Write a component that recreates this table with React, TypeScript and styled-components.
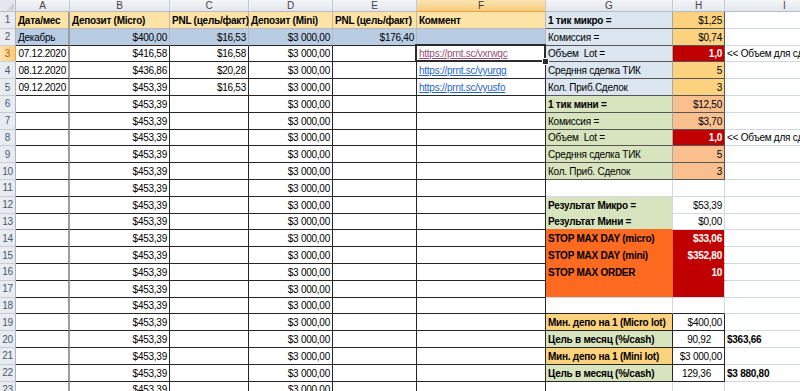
import React from "react";
import styled, { createGlobalStyle, css } from "styled-components";

const GlobalStyle = createGlobalStyle`
  html, body {
    margin: 0;
    padding: 0;
    background: #fff;
    overflow: hidden;
  }
  body {
    font-family: "Liberation Sans", Arial, sans-serif;
  }
`;

type Align = "left" | "right" | "center";

type Spec = {
  text?: string;
  bg?: string;
  align?: Align;
  bold?: boolean;
  color?: string;
  bottom: string;
  right: string;
  rightW?: number;
  pr?: number;
  link?: "visited" | "fresh";
  selected?: boolean;
};

const COLS = ["A", "B", "C", "D", "E", "F", "G", "H", "I"];
const WIDTHS = [54, 100, 79, 84, 84, 129, 127, 52, 120];
const ROWS = Array.from({ length: 23 }, (_, i) => i + 1);

const GRID = "#d0d7e5";
const DARK = "#262626";
const SOFT = "#b8b8b8";
const FROZEN = "#9d9d9d";
const MID = "#555555";

const C = {
  sand: "#fde4a6",
  blue: "#b8cce4",
  ice: "#dce6f1",
  gold: "#fcd27f",
  sage: "#d7e4bd",
  salmon: "#fabf8f",
  red: "#c00000",
  orange: "#ff6a21",
};

const Sheet = styled.div`
  display: grid;
  grid-template-columns: 16px ${WIDTHS.map((w) => `${w}px`).join(" ")};
  grid-template-rows: 12px repeat(23, 16.8px);
  width: max-content;
  font-size: 10px;
  color: #000;
`;

const Corner = styled.div`
  position: relative;
  box-sizing: border-box;
  background: #e4e8ee;
  border-right: 1px solid #b5bcc6;
  border-bottom: 1px solid #b5bcc6;

  &::after {
    content: "";
    position: absolute;
    right: 1px;
    bottom: 1px;
    border-left: 7px solid transparent;
    border-bottom: 7px solid #c9d0da;
  }
`;

const ColHead = styled.div<{ $active?: boolean }>`
  box-sizing: border-box;
  display: flex;
  align-items: center;
  justify-content: center;
  font-size: 10px;
  line-height: 11px;
  color: #444;
  background: linear-gradient(#f3f5f8, #e3e7ed);
  border-right: 1px solid #c3c9d1;
  border-bottom: 1px solid #b5bcc6;

  ${(p) =>
    p.$active &&
    css`
      color: #3a3a3a;
      background: linear-gradient(#fbe4b3, #f7cd7f);
      border-bottom-color: #f0a040;
    `}
`;

const RowHead = styled.div<{ $active?: boolean }>`
  box-sizing: border-box;
  display: flex;
  align-items: center;
  justify-content: center;
  font-size: 10px;
  letter-spacing: -0.3px;
  color: #4a5870;
  background: #e8ecf1;
  border-right: 1px solid #a8b6c8;
  border-bottom: 1px solid #c8cdd4;

  ${(p) =>
    p.$active &&
    css`
      color: #b85d10;
      background: linear-gradient(90deg, #fbe1aa, #f7cd80);
      border-right-color: #f0a040;
    `}
`;

const Cell = styled.div<{
  $bg?: string;
  $align?: Align;
  $bold?: boolean;
  $color?: string;
  $bottom: string;
  $right: string;
  $rightW?: number;
  $pr?: number;
  $selected?: boolean;
}>`
  box-sizing: border-box;
  position: relative;
  display: flex;
  align-items: flex-end;
  justify-content: ${(p) =>
    p.$align === "right" ? "flex-end" : p.$align === "center" ? "center" : "flex-start"};
  min-width: 0;
  padding: 0 ${(p) => p.$pr ?? 2}px 1px 2px;
  background: ${(p) => p.$bg ?? "#fff"};
  color: ${(p) => p.$color ?? "#000"};
  font-weight: ${(p) => (p.$bold ? 700 : 400)};
  letter-spacing: -0.25px;
  line-height: 12px;
  white-space: pre;
  border-right: ${(p) => p.$rightW ?? 1}px solid ${(p) => p.$right};
  border-bottom: 1px solid ${(p) => p.$bottom};

  ${(p) =>
    p.$selected &&
    css`
      z-index: 2;

      &::after {
        content: "";
        position: absolute;
        left: -2px;
        top: -2px;
        right: -1px;
        bottom: -1px;
        border: 2px solid #2b2b2b;
        pointer-events: none;
      }

      &::before {
        content: "";
        position: absolute;
        right: -4px;
        bottom: -4px;
        width: 5px;
        height: 5px;
        background: #2b2b2b;
        border: 1px solid #fff;
        z-index: 3;
      }
    `}
`;

const Link = styled.a<{ $visited?: boolean }>`
  color: ${(p) => (p.$visited ? "#954f72" : "#1f66c9")};
  text-decoration: underline;
`;

const dates = ["07.12.2020", "08.12.2020", "09.12.2020"];
const microDeposit = ["$416,58", "$436,86", "$453,39"];
const microPnl = ["$16,58", "$20,28", "$16,53"];
const links = ["https://prnt.sc/vxrwqc", "https://prnt.sc/vyurqg", "https://prnt.sc/vyusfo"];

function mainCell(row: number, col: number): Spec {
  const right = col === 0 ? FROZEN : row <= 2 ? SOFT : DARK;
  const rightW = col === 0 ? 2 : 1;

  if (row === 1) {
    const heads = ["Дата/мес", "Депозит (Micro)", "PNL (цель/факт)", "Депозит (Mini)", "PNL (цель/факт)", "Коммент"];
    return { text: heads[col], bg: C.sand, bold: true, bottom: SOFT, right, rightW };
  }
  if (row === 2) {
    const vals = ["Декабрь", "$400,00", "$16,53", "$3 000,00", "$176,40", ""];
    return { text: vals[col], bg: C.blue, align: col === 0 ? "left" : "right", bottom: DARK, right, rightW };
  }

  const base: Spec = { bottom: DARK, right, rightW, align: "right" };
  const k = row - 3;
  switch (col) {
    case 0:
      return { ...base, text: dates[k] };
    case 1:
      return { ...base, text: microDeposit[k] ?? "$453,39" };
    case 2:
      return { ...base, text: microPnl[k] };
    case 3:
      return { ...base, text: "$3 000,00" };
    case 5:
      return links[k]
        ? { ...base, align: "left", text: links[k], link: k === 0 ? "visited" : "fresh", selected: k === 0 }
        : base;
    default:
      return base;
  }
}

const microBlock = [
  ["1 тик микро =", "$1,25"],
  ["Комиссия =", "$0,74"],
  ["Объем  Lot =", "1,0"],
  ["Средння сделка ТИК", "5"],
  ["Кол. Приб.Сделок", "3"],
];

const miniBlock = [
  ["1 тик мини =", "$12,50"],
  ["Комиссия =", "$3,70"],
  ["Объем  Lot =", "1,0"],
  ["Средння сделка ТИК", "5"],
  ["Кол. Приб. Сделок", "3"],
];

const stops = [
  ["STOP MAX DAY (micro)", "$33,06"],
  ["STOP MAX DAY (mini)", "$352,80"],
  ["STOP MAX ORDER", "10"],
  ["", ""],
];

const targets = [
  ["Мин. депо на 1 (Micro lot)", "$400,00", "", C.gold],
  ["Цель в месяц (%/cash)", "90,92", "$363,66", C.sage],
  ["Мин. депо на 1 (Mini lot)", "$3 000,00", "", C.gold],
  ["Цель в месяц (%/cash)", "129,36", "$3 880,80", C.sage],
];

const plain = (): Spec => ({ bottom: GRID, right: GRID });

function sideCells(row: number): Spec[] {
  const i: Spec = plain();

  if (row <= 10) {
    const micro = row <= 5;
    const [label, value] = micro ? microBlock[row - 1] : miniBlock[row - 6];
    const lot = row === 3 || row === 8;
    const g: Spec = {
      text: label,
      bg: micro ? C.ice : C.sage,
      bold: row === 1 || row === 6,
      bottom: MID,
      right: "#a6a6a6",
    };
    const h: Spec = {
      text: value,
      align: "right",
      bg: lot ? C.red : micro ? C.gold : C.salmon,
      color: lot ? "#fff" : "#000",
      bold: lot,
      bottom: MID,
      right: MID,
    };
    if (lot) i.text = "<< Объем для сделки";
    return [g, h, i];
  }

  if (row === 12 || row === 13) {
    return [
      { text: row === 12 ? "Результат Микро =" : "Результат Мини =", bg: C.sage, bold: true, bottom: row === 12 ? C.sage : C.orange, right: GRID },
      { text: row === 12 ? "$53,39" : "$0,00", align: "right", bottom: GRID, right: GRID },
      i,
    ];
  }

  if (row >= 14 && row <= 17) {
    const [label, value] = stops[row - 14];
    const last = row === 17;
    return [
      { text: label, bg: C.orange, bold: true, bottom: last ? GRID : C.orange, right: C.orange },
      { text: value, bg: C.red, color: "#fff", bold: true, align: "right", bottom: last ? GRID : C.red, right: GRID },
      i,
    ];
  }

  if (row === 18) {
    return [
      { bottom: DARK, right: GRID },
      { bottom: DARK, right: GRID },
      i,
    ];
  }

  if (row >= 19 && row <= 22) {
    const [label, value, extra, bg] = targets[row - 19];
    const ratio = row === 20 || row === 22;
    return [
      { text: label, bg, bold: true, bottom: DARK, right: DARK },
      { text: value, align: "right", pr: ratio ? 13 : 2, bottom: DARK, right: DARK },
      { ...i, text: extra, bold: true },
    ];
  }

  return [plain(), plain(), i];
}

function rowSpecs(row: number): Spec[] {
  return [...[0, 1, 2, 3, 4, 5].map((c) => mainCell(row, c)), ...sideCells(row)];
}

export default function App() {
  return (
    <>
      <GlobalStyle />
      <Sheet>
        <Corner />
        {COLS.map((c) => (
          <ColHead key={c} $active={c === "F"}>
            {c}
          </ColHead>
        ))}
        {ROWS.map((row) => (
          <React.Fragment key={row}>
            <RowHead $active={row === 3}>{row}</RowHead>
            {rowSpecs(row).map((s, idx) => (
              <Cell
                key={idx}
                $bg={s.bg}
                $align={s.align}
                $bold={s.bold}
                $color={s.color}
                $bottom={s.bottom}
                $right={s.right}
                $rightW={s.rightW}
                $pr={s.pr}
                $selected={s.selected}
              >
                {s.link ? (
                  <Link href="#" $visited={s.link === "visited"}>
                    {s.text}
                  </Link>
                ) : (
                  s.text
                )}
              </Cell>
            ))}
          </React.Fragment>
        ))}
      </Sheet>
    </>
  );
}
